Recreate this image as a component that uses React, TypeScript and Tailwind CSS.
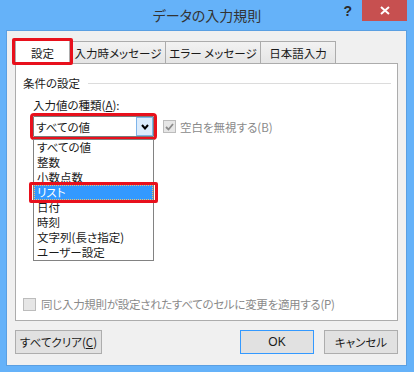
const items = ['すべての値', '整数', '小数点数', 'リスト', '日付', '時刻', '文字列(長さ指定)', 'ユーザー設定']

function CheckBox({ checked }: { checked?: boolean }) {
  return (
    <span className="w-[13px] h-[13px] border border-[#bcbcbc] bg-[#e6e6e6] flex items-center justify-center shrink-0">
      {checked && (
        <svg width="9" height="8" viewBox="0 0 9 8">
          <path d="M1 4 L3.5 6.5 L8 1" fill="none" stroke="#8a8a8a" strokeWidth="1.8" />
        </svg>
      )}
    </span>
  )
}

export default function App() {
  return (
    <div className="w-[414px] h-[372px] flex flex-col bg-[#65b2f9] font-['Noto_Sans_CJK_JP',sans-serif] [font-feature-settings:'palt'] text-[11.5px] leading-[16px] text-[#1a1a1a] overflow-hidden">
      {/* title bar */}
      <div className="relative h-[30px] shrink-0 flex items-center justify-center">
        <span className="text-[14px] text-[#333333]">データの入力規則</span>
        <div className="absolute right-[7px] top-0 flex items-start">
          <span className="mt-[3px] mr-[10px] text-[14px] font-bold text-[#2b2b2b] font-['Liberation_Sans',sans-serif]">?</span>
          <div className="w-[45px] h-[21px] bg-[#c75050] flex items-center justify-center">
            <svg width="10" height="9" viewBox="0 0 10 9">
              <path d="M1 1 L9 8 M9 1 L1 8" stroke="#ffffff" strokeWidth="2" />
            </svg>
          </div>
        </div>
      </div>

      {/* client area */}
      <div className="flex-1 ml-[6px] mr-[7px] mb-[6px] border border-[#5a9fe2] bg-[#f0f0f0] flex flex-col">
        {/* tabs */}
        <div className="mt-[8px] ml-[8px] h-[24px] flex items-end">
          <div className="relative z-10 w-[55px] h-[24px] -mb-px bg-white border border-b-0 border-[#acacac] flex items-center justify-center">
            設定
            <span className="absolute -left-[4px] -right-[4px] -top-[3px] -bottom-[1px] border-[3px] border-[#e8101c] rounded-[2px]" />
          </div>
          <div className="w-[96px] h-[22px] border border-b-0 border-[#acacac] bg-gradient-to-b from-[#f2f2f2] to-[#e5e5e5] flex items-center justify-center">
            入力時メッセージ
          </div>
          <div className="w-[96px] h-[22px] -ml-px border border-b-0 border-[#acacac] bg-gradient-to-b from-[#f2f2f2] to-[#e5e5e5] flex items-center justify-center">
            エラー メッセージ
          </div>
          <div className="w-[76px] h-[22px] -ml-px border border-b-0 border-[#acacac] bg-gradient-to-b from-[#f2f2f2] to-[#e5e5e5] flex items-center justify-center">
            日本語入力
          </div>
        </div>

        {/* panel */}
        <div className="relative mx-[8px] h-[258px] border border-[#acacac] bg-white flex flex-col pl-[7px] pr-[6px] pt-[11px] pb-[8px]">
          <div className="flex items-center">
            <span>条件の設定</span>
            <span className="flex-1 h-px bg-[#dcdcdc] ml-[8px]" />
          </div>
          <div className="ml-[10px] mt-[6px]">
            入力値の種類(<span className="underline">A</span>):
          </div>
          <div className="ml-[10px] mt-[3px] flex items-center">
            <div className="relative w-[121px] h-[21px] border border-[#7a7a7a] bg-white flex items-center pl-[2px] outline outline-[3px] outline-[#e8101c] rounded-[1px]">
              <span className="flex-1">すべての値</span>
              <span className="w-[17px] h-[19px] border border-[#7eb4ea] bg-[#dcecfc] flex items-center justify-center">
                <svg width="8" height="6" viewBox="0 0 8 6">
                  <path d="M1 1 L4 4.5 L7 1" fill="none" stroke="#000000" strokeWidth="2" />
                </svg>
              </span>
            </div>
            <div className="ml-[9px] flex items-center gap-[4px] text-[#8a8a8a]">
              <CheckBox checked />
              <span>空白を無視する(B)</span>
            </div>
          </div>

          <div className="mt-auto flex items-center gap-[5px] text-[#8a8a8a]">
            <CheckBox />
            <span className="tracking-[-0.3px]">同じ入力規則が設定されたすべてのセルに変更を適用する(P)</span>
          </div>

          {/* open dropdown list */}
          <div className="absolute left-[17px] top-[75px] w-[121px] border border-[#828282] bg-white flex flex-col">
            {items.map((it) =>
              it === 'リスト' ? (
                <div key={it} className="relative h-[15px] leading-[15px] bg-[#3399ff] text-white pl-[3px]">
                  {it}
                  <span className="absolute inset-0 border border-dotted border-[#f0c070]" />
                  <span className="absolute -left-[5px] -right-[5px] -top-[3px] -bottom-[3px] border-[3px] border-[#e8101c] rounded-[2px]" />
                </div>
              ) : (
                <div key={it} className="h-[15px] leading-[15px] pl-[3px]">
                  {it}
                </div>
              )
            )}
          </div>
        </div>

        {/* buttons */}
        <div className="mt-[9px] mx-[8px] flex items-center">
          <button className="w-[87px] h-[24px] border border-[#adadad] bg-[#e1e1e1]">
            すべてクリア(<span className="underline">C</span>)
          </button>
          <button className="ml-auto w-[74px] h-[24px] border border-[#3399ff] bg-[#e1e1e1] font-['Liberation_Sans',sans-serif] text-[12px]">
            OK
          </button>
          <button className="ml-[10px] w-[74px] h-[24px] border border-[#adadad] bg-[#e1e1e1]">
            キャンセル
          </button>
        </div>
      </div>
    </div>
  )
}
